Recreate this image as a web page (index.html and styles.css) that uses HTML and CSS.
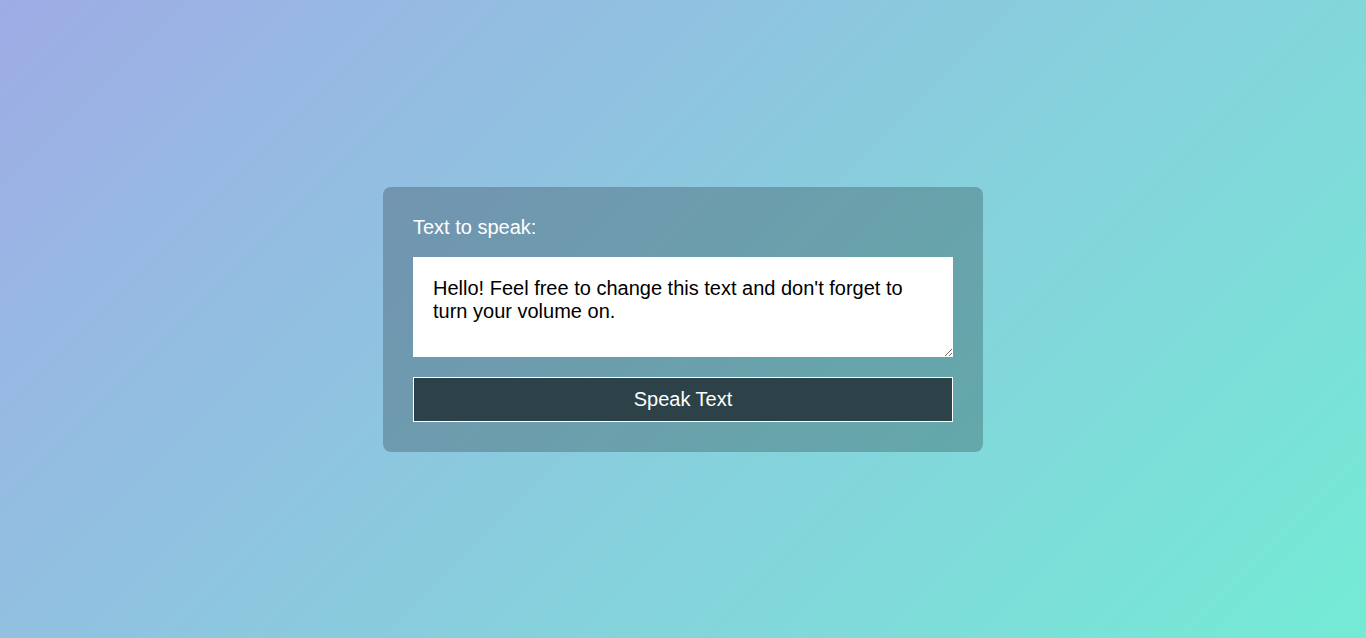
FILE: index.html
```html
<!DOCTYPE html>
<html lang="en">
<head>
<meta charset="utf-8">
<title>Text to Speech</title>
<link rel="stylesheet" href="styles.css">
</head>
<body>
<main class="page">
  <div class="card">
    <label class="label" for="text">Text to speak:</label>
    <textarea id="text" class="input">Hello! Feel free to change this text and don't forget to turn your volume on.</textarea>
    <button class="speak" type="button">Speak Text</button>
  </div>
</main>
</body>
</html>
```

FILE: styles.css
```css
* { box-sizing: border-box; }
html, body { margin: 0; height: 100%; }
body {
  font-family: "Liberation Sans", Arial, sans-serif;
  background: linear-gradient(135deg, #9face6 0%, #74ebd5 100%);
}
.page {
  height: 100%;
  display: flex;
  align-items: center;
  justify-content: center;
}
.card {
  width: 600px;
  padding: 30px;
  border-radius: 8px;
  background: rgba(0, 0, 0, 0.22);
  display: flex;
  flex-direction: column;
}
.label {
  color: #fff;
  font-size: 20px;
  line-height: 21px;
  margin-bottom: 19px;
}
.input {
  width: 540px;
  height: 100px;
  padding: 20px;
  border: none;
  font-family: "Liberation Sans", Arial, sans-serif;
  font-size: 20px;
  line-height: 23px;
  color: #000;
  background: #fff;
  margin: 0 0 20px;
  outline: none;
}
.speak {
  width: 540px;
  height: 45px;
  background: #2c4248;
  border: 1px solid #fff;
  color: #fff;
  font-family: "Liberation Sans", Arial, sans-serif;
  font-size: 20px;
  cursor: pointer;
}
```
